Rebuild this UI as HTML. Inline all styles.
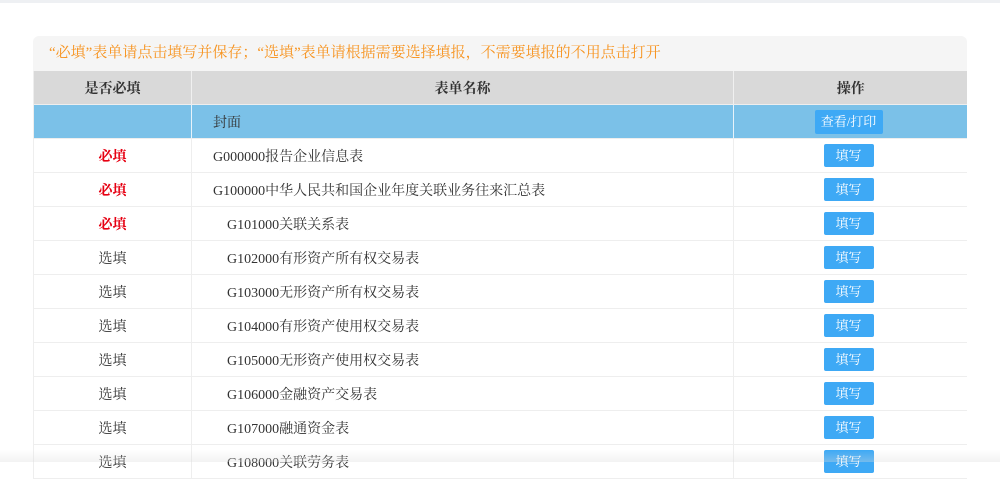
<!DOCTYPE html>
<html><head><meta charset="utf-8"><style>
body{margin:0;width:1000px;height:462px;overflow:hidden;background:#fff;font-family:"Liberation Serif","Noto Serif CJK SC",serif;font-size:14px;color:#333;position:relative}
.top{position:absolute;left:0;top:0;width:1000px;height:3px;background:#eef0f3}
.panel{position:absolute;left:33px;top:36px;width:934px;border-radius:6px 6px 0 0;overflow:hidden;background:#fff}
.tip{height:35px;background:#f5f5f5;color:#f7931e;font-size:15px;line-height:35px;padding-left:16px}
table{border-collapse:collapse;width:934px;table-layout:fixed}
td,th{height:33px;padding:0;border:1px solid #eee;border-top:none;font-weight:normal}
th{background:#d9d9d9;border-right:1px solid #f0f0f0;font-weight:bold;color:#333}
tr.cover td{background:#7bc1e8;border-right:1px solid #e8f3fa}
td.c{text-align:center}
.r{color:#e60012;font-weight:bold}
.n{padding-left:21px}.n2{padding-left:35px}
.b{display:inline-block;background:#3ea9f5;color:#fff;border-radius:2px;height:23px;line-height:23px;width:50px;text-align:center;font-size:13px;margin-right:4px}
.bw{width:68px;height:24px;line-height:24px}
.fade{position:absolute;left:0;bottom:0;width:1000px;height:12px;background:linear-gradient(rgba(255,255,255,0),rgba(220,220,220,.35))}
</style></head><body>
<div class="top"></div>
<div class="panel">
<div class="tip">“必填”表单请点击填写并保存；“选填”表单请根据需要选择填报，不需要填报的不用点击打开</div>
<table>
<colgroup><col style="width:158px"><col style="width:542px"><col style="width:234px"></colgroup>
<tr><th>是否必填</th><th>表单名称</th><th style="border-right:none">操作</th></tr>
<tr class="cover"><td></td><td class="n">封面</td><td class="c"><span class="b bw">查看/打印</span></td></tr>
<tr><td class="c r">必填</td><td class="n">G000000报告企业信息表</td><td class="c"><span class="b">填写</span></td></tr>
<tr><td class="c r">必填</td><td class="n">G100000中华人民共和国企业年度关联业务往来汇总表</td><td class="c"><span class="b">填写</span></td></tr>
<tr><td class="c r">必填</td><td class="n2">G101000关联关系表</td><td class="c"><span class="b">填写</span></td></tr>
<tr><td class="c">选填</td><td class="n2">G102000有形资产所有权交易表</td><td class="c"><span class="b">填写</span></td></tr>
<tr><td class="c">选填</td><td class="n2">G103000无形资产所有权交易表</td><td class="c"><span class="b">填写</span></td></tr>
<tr><td class="c">选填</td><td class="n2">G104000有形资产使用权交易表</td><td class="c"><span class="b">填写</span></td></tr>
<tr><td class="c">选填</td><td class="n2">G105000无形资产使用权交易表</td><td class="c"><span class="b">填写</span></td></tr>
<tr><td class="c">选填</td><td class="n2">G106000金融资产交易表</td><td class="c"><span class="b">填写</span></td></tr>
<tr><td class="c">选填</td><td class="n2">G107000融通资金表</td><td class="c"><span class="b">填写</span></td></tr>
<tr><td class="c">选填</td><td class="n2">G108000关联劳务表</td><td class="c"><span class="b">填写</span></td></tr>
</table>
</div>
<div class="fade"></div>
</body></html>
